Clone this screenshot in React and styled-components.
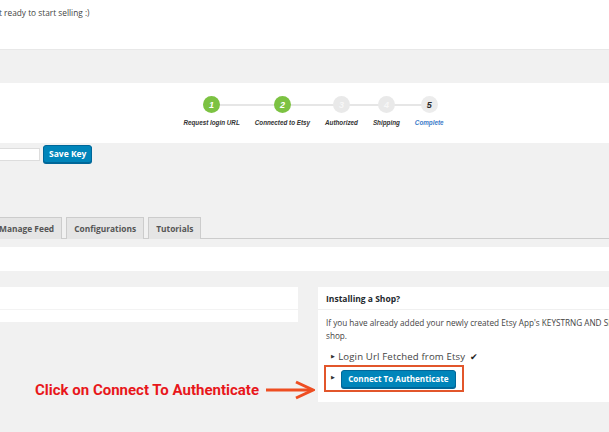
import React from "react";
import styled, { createGlobalStyle } from "styled-components";

const GlobalStyle = createGlobalStyle`
  html, body {
    margin: 0;
    padding: 0;
    background: #f1f1f1;
    overflow: hidden;
  }
  body {
    width: 609px;
    height: 432px;
    font-family: "Open Sans", "Noto Sans", sans-serif;
    color: #444;
  }
  * {
    box-sizing: border-box;
  }
`;

const Page = styled.div`
  display: flex;
  flex-direction: column;
  width: 609px;
`;

const Notice = styled.div`
  height: 50px;
  background: #fff;
  border-bottom: 1px solid #e8e8e8;
  padding: 7px 0 0 0;
  font-size: 8.3px;
  color: #444;
  .notice {
    &-text {
      margin-left: -1px;
      white-space: nowrap;
    }
  }
`;

const StepperPanel = styled.div`
  margin-top: 33px;
  height: 60px;
  background: #fff;
  display: flex;
  justify-content: center;
  padding: 13px 0 0 18px;
`;

const Steps = styled.div`
  display: flex;
  align-items: flex-start;
`;

const Step = styled.div`
  position: relative;
  display: flex;
  flex-direction: column;
  align-items: center;
  padding: 0 7.5px;
  &::before,
  &::after {
    content: "";
    position: absolute;
    top: 8px;
    height: 2px;
    background: #e6e6e6;
    z-index: 0;
  }
  &::before {
    left: 0;
    right: 50%;
    display: ${(p) => (p.$first ? "none" : "block")};
  }
  &::after {
    left: 50%;
    right: 0;
    display: ${(p) => (p.$last ? "none" : "block")};
  }
`;

const Circle = styled.div`
  position: relative;
  z-index: 1;
  width: 17px;
  height: 17px;
  border-radius: 50%;
  display: flex;
  align-items: center;
  justify-content: center;
  font-family: "Liberation Sans", Arial, sans-serif;
  font-style: italic;
  font-weight: 700;
  font-size: 9px;
  background: ${(p) =>
    p.$state === "done" ? "#7cc242" : p.$state === "current" ? "#ececec" : "#e9e9e9"};
  color: ${(p) =>
    p.$state === "done" ? "#fff" : p.$state === "current" ? "#2b2b2b" : "#f7f7f7"};
`;

const StepLabel = styled.div`
  margin-top: 5px;
  font-family: "Liberation Sans", Arial, sans-serif;
  font-style: italic;
  font-weight: 700;
  font-size: 6.3px;
  line-height: 9px;
  white-space: nowrap;
  color: ${(p) => (p.$link ? "#3d7cc9" : "#333")};
`;

const KeyRow = styled.div`
  display: flex;
  align-items: center;
  gap: 3px;
  margin-top: 2px;
  height: 18px;
`;

const KeyInput = styled.input`
  width: 50px;
  height: 13px;
  margin-left: -10px;
  border: 1px solid #ddd;
  background: #fff;
  padding: 0;
`;

const Button = styled.button`
  height: 18px;
  padding: 0 ${(p) => (p.$wide ? "6px" : "5px")};
  border: 1px solid #006799;
  border-radius: 3px;
  background: #0085ba;
  color: #fff;
  font-family: "Open Sans", "Noto Sans", sans-serif;
  font-weight: 700;
  font-size: ${(p) => (p.$wide ? "8.1px" : "8.5px")};
  line-height: 16px;
  white-space: nowrap;
  box-shadow: 0 1px 0 #006799;
  cursor: pointer;
`;

const Tabs = styled.div`
  display: flex;
  gap: 4px;
  margin-top: 54px;
  margin-left: -9px;
  border-bottom: 1px solid #ccc;
  width: 618px;
`;

const Tab = styled.div`
  height: 22px;
  padding: 0 7px;
  display: flex;
  align-items: center;
  background: #e5e5e5;
  border: 1px solid #ccc;
  border-bottom: none;
  margin-bottom: -1px;
  font-weight: 700;
  font-size: 8.4px;
  color: #555;
  white-space: nowrap;
`;

const Strip = styled.div`
  margin-top: 8px;
  height: 24px;
  background: #fff;
`;

const Columns = styled.div`
  position: relative;
  display: flex;
  align-items: flex-start;
  gap: 20px;
  margin-top: 16px;
`;

const LeftBox = styled.div`
  width: 298px;
  flex-shrink: 0;
  height: 35px;
  background: #fff;
  .left {
    &-head {
      height: 23px;
      border-bottom: 1px solid #f3f3f3;
    }
  }
`;

const ShopBox = styled.div`
  width: 330px;
  flex-shrink: 0;
  height: 115px;
  background: #fff;
  color: #444;
  font-size: 8.5px;
  .shop {
    &-head {
      height: 23px;
      padding: 0 8px;
      display: flex;
      align-items: center;
      border-bottom: 1px solid #f0f0f0;
      font-weight: 700;
      color: #23282d;
    }
    &-body {
      padding: 6px 8px 0 8px;
    }
    &-text {
      margin: 0;
      font-size: 8.2px;
      line-height: 13px;
      white-space: nowrap;
    }
  }
`;

const List = styled.ul`
  list-style: none;
  margin: 8px 0 0 0;
  padding: 0;
  display: flex;
  flex-direction: column;
  align-items: flex-start;
  gap: 2px;
`;

const Item = styled.li`
  display: inline-flex;
  align-items: ${(p) => (p.$boxed ? "flex-start" : "center")};
  gap: 3px;
  line-height: 13px;
  font-size: 9.6px;
  letter-spacing: 0.15px;
  ${(p) =>
    p.$boxed &&
    `
    margin-left: -2px;
    padding: 3px 6px 2px 5px;
    border: 2px solid #e2562b;
    gap: 6px;
  `}
  .item-bullet {
    font-size: 5px;
    color: #333;
    ${(p) => (p.$boxed ? "margin-top: 1px;" : "margin-left: 5px;")}
  }
  .item-check {
    font-size: 9px;
    color: #222;
    margin-left: 2px;
  }
`;

const Annotation = styled.div`
  position: absolute;
  left: 35px;
  top: 93px;
  display: flex;
  align-items: center;
  gap: 6px;
  .annotation-text {
    font-family: Roboto, "Liberation Sans", sans-serif;
    font-weight: 700;
    font-size: 15px;
    color: #e8171b;
    white-space: nowrap;
  }
`;

const steps = [
  { n: 1, label: "Request login URL", state: "done" },
  { n: 2, label: "Connected to Etsy", state: "done" },
  { n: 3, label: "Authorized", state: "todo" },
  { n: 4, label: "Shipping", state: "todo" },
  { n: 5, label: "Complete", state: "current" },
];

const Arrow = () => (
  <svg width="50" height="20" viewBox="0 0 50 20">
    <path d="M1 10 L46 10" stroke="#ee4e22" strokeWidth="3" fill="none" />
    <path
      d="M31 2 L48 10 L31 18"
      stroke="#ee4e22"
      strokeWidth="3"
      fill="none"
      strokeLinejoin="miter"
    />
  </svg>
);

const App = () => {
  return (
    <Page>
      <GlobalStyle />
      <Notice>
        <div className="notice-text">t ready to start selling :)</div>
      </Notice>
      <StepperPanel>
        <Steps>
          {steps.map((s, i) => (
            <Step key={s.n} $first={i === 0} $last={i === steps.length - 1}>
              <Circle $state={s.state}>{s.n}</Circle>
              <StepLabel $link={s.state === "current"}>{s.label}</StepLabel>
            </Step>
          ))}
        </Steps>
      </StepperPanel>
      <KeyRow>
        <KeyInput type="text" />
        <Button>Save Key</Button>
      </KeyRow>
      <Tabs>
        <Tab>Manage Feed</Tab>
        <Tab>Configurations</Tab>
        <Tab>Tutorials</Tab>
      </Tabs>
      <Strip />
      <Columns>
        <LeftBox>
          <div className="left-head"></div>
        </LeftBox>
        <ShopBox>
          <div className="shop-head">Installing a Shop?</div>
          <div className="shop-body">
            <p className="shop-text">
              If you have already added your newly created Etsy App's KEYSTRNG AND SH
              <br />
              shop.
            </p>
            <List>
              <Item>
                <span className="item-bullet">▶</span>
                <span>Login Url Fetched from Etsy</span>
                <span className="item-check">✔</span>
              </Item>
              <Item $boxed>
                <span className="item-bullet">▶</span>
                <Button $wide>Connect To Authenticate</Button>
              </Item>
            </List>
          </div>
        </ShopBox>
        <Annotation>
          <span className="annotation-text">Click on Connect To Authenticate</span>
          <Arrow />
        </Annotation>
      </Columns>
    </Page>
  );
};

export default App;
